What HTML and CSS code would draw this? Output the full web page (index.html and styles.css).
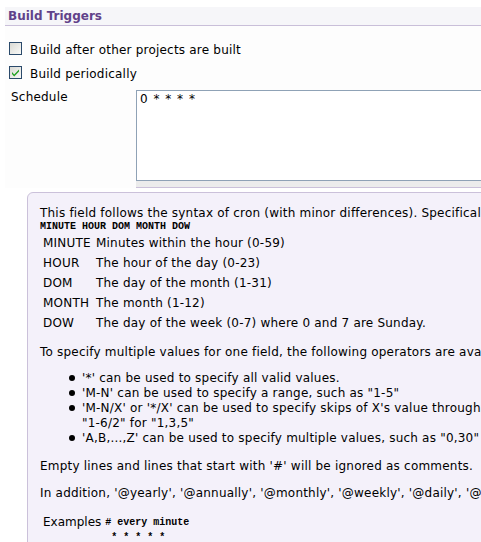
FILE: index.html
```html
<!DOCTYPE html>
<html>
<head>
<meta charset="utf-8">
<link rel="stylesheet" href="styles.css">
</head>
<body>
<div class="page">
  <div class="section-header">Build Triggers</div>
  <div class="opts">
    <div class="opt">
      <svg class="cb" width="13" height="13" viewBox="0 0 13 13"><defs><linearGradient id="g1" x1="0" y1="0" x2="1" y2="1"><stop offset="0" stop-color="#d8d8d2"/><stop offset="1" stop-color="#fbfbf9"/></linearGradient></defs><rect x="0.5" y="0.5" width="12" height="12" fill="url(#g1)" stroke="#2b4a6b"/></svg>
      <span>Build after other projects are built</span>
    </div>
    <div class="opt">
      <svg class="cb" width="13" height="13" viewBox="0 0 13 13"><defs><linearGradient id="g2" x1="0" y1="0" x2="1" y2="1"><stop offset="0" stop-color="#d8d8d2"/><stop offset="1" stop-color="#fbfbf9"/></linearGradient></defs><rect x="0.5" y="0.5" width="12" height="12" fill="url(#g2)" stroke="#2b4a6b"/><path d="M3 6 L5.2 8.4 L10 3.6 L10 5.6 L5.2 10.4 L3 8 Z" fill="#21a121"/></svg>
      <span>Build periodically</span>
    </div>
    <div class="sched">
      <div class="label">Schedule</div>
      <div class="field">
        <div class="ta">0 * * * *</div>
        <div class="handle"></div>
      </div>
    </div>
  </div>
  <div class="help">
    <div class="line">This field follows the syntax of cron (with minor differences). Specifically, each line consists of 5 fields separated by TAB or whitespace:</div>
    <div class="mono-line">MINUTE HOUR DOM MONTH DOW</div>
    <div class="fields">
      <div class="k">MINUTE</div><div class="v">Minutes within the hour (0-59)</div>
      <div class="k">HOUR</div><div class="v">The hour of the day (0-23)</div>
      <div class="k">DOM</div><div class="v">The day of the month (1-31)</div>
      <div class="k">MONTH</div><div class="v">The month (1-12)</div>
      <div class="k">DOW</div><div class="v">The day of the week (0-7) where 0 and 7 are Sunday.</div>
    </div>
    <div class="line p2">To specify multiple values for one field, the following operators are available. In the order of precedence,</div>
    <ul class="ops">
      <li>'*' can be used to specify all valid values.</li>
      <li>'M-N' can be used to specify a range, such as "1-5"</li>
      <li>'M-N/X' or '*/X' can be used to specify skips of X's value through the range, such as "*/15" in the MINUTE field for "0,15,30,45" and<br>"1-6/2" for "1,3,5"</li>
      <li>'A,B,...,Z' can be used to specify multiple values, such as "0,30" or "1,3,5"</li>
    </ul>
    <div class="line p3">Empty lines and lines that start with '#' will be ignored as comments.</div>
    <div class="line p4">In addition, '@yearly', '@annually', '@monthly', '@weekly', '@daily', '@midnight', and '@hourly' are supported.</div>
    <div class="examples">
      <div class="k">Examples</div>
      <div class="code"># every minute<br>&nbsp;* * * * *</div>
    </div>
  </div>
</div>
</body>
</html>
```

FILE: styles.css
```css
html, body {
  margin: 0;
  padding: 0;
  background: #ffffff;
  overflow: hidden;
}

.page {
  width: 1000px;
  font-family: "DejaVu Sans", Verdana, sans-serif;
  font-size: 12px;
  letter-spacing: 0.21px;
  color: #000;
}

.section-header {
  margin: 7px 0 0 5px;
  height: 18px;
  line-height: 18px;
  padding-left: 3px;
  background: #f6f6f9;
  border-bottom: 1px solid #c9bfd9;
  color: #61428a;
  font-weight: bold;
  letter-spacing: 0;
}

.opts {
  background: #fdfdfd;
  padding-top: 10px;
  margin-left: 5px;
}

.opt {
  height: 24px;
  display: flex;
  align-items: flex-start;
  padding-left: 4px;
}

.cb {
  display: block;
  flex: none;
  margin: 6px 8px 0 0;
}

.opt span {
  line-height: 15px;
  margin-top: 7px;
}

.sched {
  margin-top: 6px;
  display: flex;
}

.label {
  width: 125px;
  padding-left: 6px;
  line-height: 15px;
}

.field {
  flex: 1;
}

.ta {
  box-sizing: border-box;
  height: 91px;
  border: 1px solid #8fa2b6;
  background: #fff;
  padding: 1px 3px;
  line-height: 15px;
  letter-spacing: 1px;
}

.handle {
  height: 6px;
  background: #ececec;
  border-bottom: 1px solid #cbc1da;
}

.help {
  margin: 4px 0 0 27px;
  background: #f4f1fa;
  border: 1px solid #cbc1da;
  border-top-left-radius: 6px;
  padding: 13px 0 20px 12px;
  white-space: nowrap;
  line-height: 15px;
}

.mono-line {
  font-family: "Liberation Mono", "DejaVu Sans Mono", monospace;
  font-weight: bold;
  font-size: 10px;
  line-height: 12px;
  letter-spacing: 0;
}

.fields {
  display: grid;
  grid-template-columns: 53px auto;
  grid-auto-rows: 20px;
  align-items: center;
  margin-left: 3px;
}

.p2 {
  margin-top: 12px;
}

.ops {
  margin: 11px 0 0 0;
  padding-left: 42px;
  list-style: none;
}

.ops li {
  position: relative;
}

.ops li::before {
  content: "";
  position: absolute;
  left: -13px;
  top: 4px;
  width: 6px;
  height: 6px;
  border-radius: 50%;
  background: #000;
}

.p3 {
  margin-top: 13px;
}

.p4 {
  margin-top: 12px;
}

.examples {
  margin-top: 14px;
  margin-left: 3px;
  display: flex;
}

.examples .k {
  letter-spacing: 0;
  padding-right: 4px;
}

.code {
  font-family: "Liberation Mono", "DejaVu Sans Mono", monospace;
  font-size: 10px;
  font-weight: bold;
  line-height: 15px;
  letter-spacing: 0;
}
```
